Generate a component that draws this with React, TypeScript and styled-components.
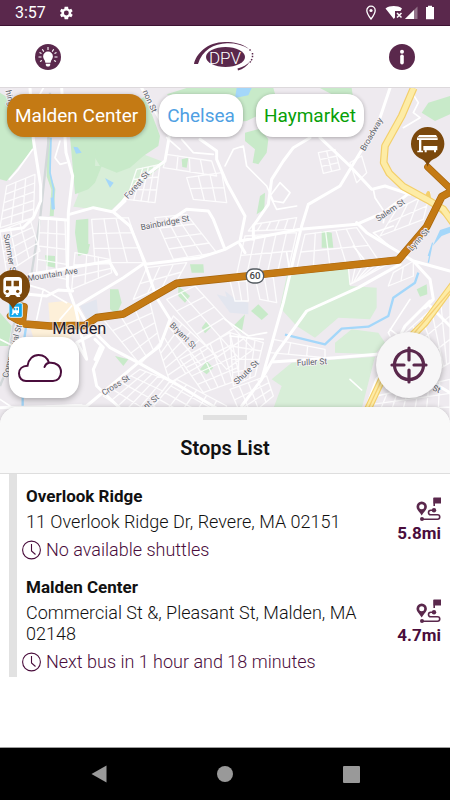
import React from "react";
import styled, { createGlobalStyle, css } from "styled-components";

const plum = "#5a284c";
const plumDark = "#4a0d3c";

const GlobalStyle = createGlobalStyle`
  *, *::before, *::after { box-sizing: border-box; }
  body { margin: 0; background: #fff; font-family: Roboto, "Liberation Sans", sans-serif; color: #111; }
  button { font: inherit; border: 0; padding: 0; cursor: pointer; }
  h1, h2, p, ul { margin: 0; padding: 0; }
`;

const Screen = styled.div`
  display: flex;
  flex-direction: column;
  min-height: 100vh;
`;

const StatusBar = styled.div`
  display: flex;
  align-items: center;
  justify-content: space-between;
  height: 26px;
  padding: 0 15px;
  background: ${plum};
  border-bottom: 1px solid #3d1232;
  color: #fff;
  font-size: 16px;
`;

const StatusGroup = styled.div<{ $gap: number }>`
  display: flex;
  align-items: center;
  gap: ${(p) => p.$gap}px;
  svg { display: block; }
`;

const Header = styled.header`
  display: flex;
  align-items: center;
  justify-content: space-between;
  height: 61px;
  padding: 0 35px;
  background: #fff;
`;

const IconButton = styled.button`
  display: flex;
  width: 26px;
  height: 26px;
  background: none;
`;

const MapArea = styled.section`
  position: relative;
  height: 336px;
  border-top: 1px solid #ddd9dc;
  background: #eeeaef;
`;

const MapSvg = styled.svg`
  position: absolute;
  inset: 0;
  width: 100%;
  height: 100%;
`;

const Chips = styled.div`
  position: relative;
  display: flex;
  gap: 13px;
  padding: 6px 7px;
`;

const Chip = styled.button<{ $color: string; $active?: boolean }>`
  height: 43px;
  padding: 0 8px;
  border-radius: 17px;
  font-size: 19px;
  white-space: nowrap;
  box-shadow: 0 1px 4px rgba(0, 0, 0, 0.3);
  ${(p) =>
    p.$active
      ? css`background: ${p.$color}; color: #fff;`
      : css`background: #fff; color: ${p.$color};`}
`;

const FloatingButton = styled.button<{ $side: "left" | "right" }>`
  position: absolute;
  bottom: 25px;
  display: flex;
  align-items: center;
  justify-content: center;
  box-shadow: 0 2px 6px rgba(0, 0, 0, 0.3);
  ${(p) =>
    p.$side === "left"
      ? css`left: 9px; width: 70px; height: 61px; padding-right: 9px; border-radius: 17px; background: #fff;`
      : css`right: 8px; width: 66px; height: 66px; border-radius: 50%; background: #f7f6f7;`}
`;

const Sheet = styled.main`
  position: relative;
  flex: 1;
  margin-top: -16px;
  border-radius: 18px 18px 0 0;
  background: #fff;
  box-shadow: 0 0 5px rgba(0, 0, 0, 0.18);
`;

const SheetHeader = styled.div`
  display: flex;
  flex-direction: column;
  align-items: center;
  height: 67px;
  padding-top: 8px;
  border-bottom: 1px solid #dedede;
  border-radius: 18px 18px 0 0;
  background: #f9f9f9;
`;

const Handle = styled.div`
  width: 44px;
  height: 5px;
  background: #e1e1e1;
`;

const SheetTitle = styled.h1`
  margin-top: 16px;
  font-size: 20px;
  line-height: 24px;
  font-weight: 600;
`;

const StopList = styled.ul`
  margin-left: 9px;
  border-left: 8px solid #e2e2e2;
  list-style: none;
`;

const StopItem = styled.li`
  display: flex;
  align-items: center;
  padding: 10px 9px 3px 5px;
`;

const StopInfo = styled.div`
  flex: 1;
  min-width: 0;
`;

const StopName = styled.h2`
  padding-left: 4px;
  font-size: 17px;
  line-height: 24px;
  font-weight: 700;
`;

const Address = styled.p`
  padding: 3px 4px 6px;
  font-size: 18px;
  line-height: 21px;
  font-weight: 300;
`;

const Arrival = styled.p`
  display: flex;
  align-items: center;
  gap: 5px;
  font-size: 18px;
  line-height: 24px;
  font-weight: 300;
  color: ${plumDark};
  svg { display: block; }
`;

const Distance = styled.div`
  display: flex;
  flex-direction: column;
  align-items: flex-end;
  width: 62px;
  padding-bottom: 4px;
  font-size: 17px;
  line-height: 24px;
  font-weight: 700;
  color: ${plumDark};
  svg { display: block; }
`;

const NavBar = styled.nav`
  display: flex;
  align-items: center;
  justify-content: space-around;
  height: 53px;
  padding: 0 36px;
  border-top: 1px solid #aaa;
  background: #000;
`;

const NavButton = styled.button`
  display: flex;
  justify-content: center;
  width: 48px;
  background: none;
`;

type Pt = [number, number];

/* Street grid inside a four-cornered block: cols x rows of crossing lines. */
function mesh([a, b, c, d]: [Pt, Pt, Pt, Pt], cols: number, rows: number) {
  const at = (u: number, v: number) =>
    [0, 1]
      .map((k) =>
        Math.round((1 - u) * (1 - v) * a[k] + u * (1 - v) * b[k] + u * v * c[k] + (1 - u) * v * d[k]),
      )
      .join(",");
  let path = "";
  for (let i = 0; i <= cols; i++) path += `M${at(i / cols, 0)} L${at(i / cols, 1)}`;
  for (let j = 0; j <= rows; j++) path += `M${at(0, j / rows)} L${at(1, j / rows)}`;
  return path;
}

const streetGrids = [
  mesh([[20, 300], [105, 265], [100, 395], [0, 425]], 3, 5),
  mesh([[0, 435], [90, 400], [120, 495], [20, 560]], 3, 4),
  mesh([[120, 400], [195, 400], [200, 580], [110, 560]], 3, 4),
  mesh([[410, 250], [480, 235], [465, 350], [380, 340]], 4, 3),
  mesh([[500, 205], [635, 225], [650, 270], [490, 245]], 4, 1),
  mesh([[560, 275], [665, 260], [680, 350], [580, 340]], 3, 2),
  mesh([[465, 395], [560, 385], [650, 500], [520, 520]], 3, 4),
  mesh([[275, 400], [385, 395], [430, 530], [285, 530]], 3, 3),
  mesh([[225, 500], [330, 520], [335, 560], [215, 610]], 3, 3),
  mesh([[440, 545], [560, 530], [530, 585], [400, 640]], 3, 2),
  mesh([[500, 640], [585, 600], [760, 790], [680, 850]], 2, 6),
  mesh([[520, 690], [650, 810], [510, 890], [475, 780]], 5, 3),
  mesh([[310, 700], [450, 650], [480, 770], [420, 835]], 3, 4),
  mesh([[420, 850], [510, 885], [420, 1005], [310, 930]], 5, 4),
  mesh([[530, 880], [680, 960], [630, 1060], [460, 960]], 5, 4),
  mesh([[690, 740], [790, 770], [765, 870], [700, 900]], 4, 4),
  mesh([[540, 820], [690, 740], [720, 880], [610, 920]], 5, 4),
  mesh([[760, 415], [890, 395], [880, 430], [745, 435]], 5, 1),
  mesh([[735, 450], [890, 440], [865, 550], [710, 565]], 5, 2),
  mesh([[915, 445], [1070, 425], [1140, 530], [890, 550]], 5, 2),
  mesh([[955, 200], [1005, 190], [1020, 250], [970, 262]], 2, 3),
  mesh([[1050, 230], [1085, 210], [1100, 260], [1070, 290]], 1, 1),
  mesh([[1045, 545], [1170, 530], [1080, 580], [1050, 595]], 6, 1),
  mesh([[820, 760], [975, 790], [975, 815], [810, 800]], 3, 1),
  mesh([[765, 575], [820, 575], [830, 650], [780, 640]], 2, 1),
  mesh([[690, 585], [740, 585], [745, 645], [705, 645]], 2, 1),
  mesh([[690, 910], [800, 870], [820, 930], [730, 1005]], 4, 3),
  mesh([[1210, 745], [1350, 620], [1350, 830], [1300, 860]], 5, 3),
  mesh([[1130, 930], [1350, 880], [1350, 1005], [1090, 1005]], 7, 3),
  mesh([[1180, 560], [1240, 525], [1240, 570], [1165, 600]], 2, 1),
  mesh([[1190, 370], [1290, 320], [1270, 400], [1140, 450]], 3, 2),
  mesh([[140, 960], [245, 955], [260, 1005], [130, 1005]], 2, 1),
].join("");

const minorStreets =
  "M28,280 55,250 98,190M180,165 165,215 180,235 200,230M545,160 580,200 640,205M100,60 130,6M500,155 540,190M675,240 700,190 730,180 740,240 800,300" +
  "M1230,10 1255,50 1240,80 1260,95 1210,125M1120,310 1125,335 1155,380 1150,410M800,300 820,345 850,350 870,320 840,290 810,330 830,370 890,360" +
  "M0,620 60,590 130,610 200,650M130,610 110,700M215,660 180,700 170,740M0,760 40,780 40,900M0,940 30,960M675,700 745,750 800,740M690,750 790,760" +
  "M1170,750 1165,740 1230,640M1050,880 1085,912M1170,730 1210,760M860,500 870,560M1180,490 1120,440 1180,420M1060,480 1100,530";

const roads =
  "M90,6 100,160 122,300 122,345 100,395 70,425 0,435M185,6 198,200 218,270 205,380 202,600 222,655M425,6 480,100 508,150 495,225 415,285 365,350 340,375" +
  "M120,395 200,402M208,385 280,365 340,378 390,420 435,530M340,378 375,345M435,530 370,575 230,660 265,720 330,785 415,830 530,895 680,985" +
  "M435,535 470,635 510,700 480,780 415,830 260,960 0,965M435,535 600,515 675,490 720,465 900,430 1070,415 1150,380 1230,320" +
  "M90,565 185,550 327,525 350,565M85,625 140,630 175,612 218,615 M675,490 640,400 625,375 560,370 500,410" +
  "M600,160 650,195 650,220 680,290 735,390 720,465M930,155 880,185 850,225 815,280 805,355 760,420 760,460" +
  "M960,155 1050,240 1115,310 1155,300 1230,325M1170,6 1135,110 1080,200 1020,300 925,355 905,420 885,500 850,650 785,880" +
  "M725,960 785,880 830,800 920,675 1075,605 1200,535M720,475 735,500M815,828 1005,815 1130,805M1290,645 1215,720 1205,740" +
  "M1070,410 1100,440 1240,525 1290,580 1300,640 1275,665M1240,525 1350,555M1290,660 1350,720M1270,340 1350,385" +
  "M1175,830 1130,880 1085,1005M1300,890 1350,920M230,770 315,725M285,760 310,785 280,850 290,900 400,1005M225,660 260,820 230,770M300,785 285,820";

const parks = [
  "0,20 40,45 100,90 98,190 20,285 0,280",
  "435,30 480,150 475,180 430,210 390,245 350,260 300,240 285,215 275,150",
  "560,6 820,6 835,60 740,105 675,110 500,25",
  "735,140 780,128 805,160 800,200 775,235 758,230 765,190 735,165",
  "960,6 1055,6 1060,40 1005,30",
  "1265,80 1285,50 1350,30 1350,85 1305,105",
  "780,330 795,320 793,370 770,385",
  "965,435 995,440 1000,485 965,485",
  "545,220 565,215 560,245 547,243",
  "228,402 265,398 265,500 235,510 225,440",
  "775,655 805,685 785,702 753,675",
  "700,720 735,685 725,740",
  "1250,610 1280,595 1282,625 1260,632",
  "135,508 165,510 165,545 140,540",
  "238,470 270,475 262,505 240,500",
  "330,610 355,610 365,650 350,685 330,670",
  "570,535 610,535 612,560 575,560",
  "535,600 570,630 555,650 535,630",
  "605,725 620,705 632,725 615,742",
  "345,810 385,820 370,840",
  "600,850 620,825 640,845 620,865",
  "0,680 35,720 25,780 0,780",
];

const paleParks = [
  "210,150 300,150 305,240 350,258 430,205 497,230 460,260 330,375 220,362 235,325",
  "860,570 1045,545 1050,600 1130,605 1130,665 1110,700 1015,695 945,755 890,720 840,665",
  "1005,770 1055,730 1135,740 1155,770 1125,805 1005,800",
  "875,830 1125,812 1075,1008 805,1008 845,900 815,880",
];

const labels: { text: string; x: number; y: number; angle: number }[] = [
  { text: "Forest St", x: 412, y: 298, angle: -49 },
  { text: "Bainbridge St", x: 495, y: 412, angle: -11 },
  { text: "Broadway", x: 1116, y: 146, angle: -60 },
  { text: "Salem St", x: 1172, y: 374, angle: -34 },
  { text: "Mountain Ave", x: 158, y: 567, angle: -9 },
  { text: "Summer St", x: 28, y: 505, angle: 80 },
  { text: "Bryant St", x: 548, y: 750, angle: 45 },
  { text: "Shute St", x: 740, y: 860, angle: -44 },
  { text: "Fuller St", x: 936, y: 830, angle: -3 },
  { text: "Cross St", x: 348, y: 899, angle: -32 },
  { text: "nt St", x: 455, y: 948, angle: -40 },
  { text: "Lynn St", x: 1258, y: 462, angle: -48 },
  { text: "hing", x: 28, y: 36, angle: 78 },
  { text: "non St", x: 448, y: 46, angle: 66 },
  { text: "Commercial St", x: 38, y: 796, angle: -75 },
  { text: "Beach St", x: 1275, y: 895, angle: 24 },
];

const route =
  "M60,660 72,662 68,700 40,682 32,690 75,714 150,720 255,718 290,695 370,684 530,592 675,577 1195,522 1280,422 1325,332 1350,318";

function CityMap() {
  return (
    <MapSvg viewBox="0 6 1350 1005" preserveAspectRatio="xMidYMin slice" role="img" aria-label="Map of Malden">
      <rect y="6" width="1350" height="1005" fill="#eeeaef" />
      <path d="M145,650 195,645 240,665 240,710 200,770 100,755 90,722 150,720Z" fill="#fdf0d9" />
      <path d="M240,660 290,640 295,690 262,700ZM650,625 745,650 745,685 690,680ZM675,615 720,650 690,670Z" fill="#e3e6ef" />
      {paleParks.map((p) => <polygon key={p} points={p} fill="#d8eed8" />)}
      {parks.map((p) => <polygon key={p} points={p} fill="#c8eac9" />)}
      <polygon points="210,150 290,150 285,240 305,240 285,290 265,310 225,325" fill="#c8eac9" />
      <path d="M148,155 146,270 160,310 155,390" fill="none" stroke="#c8eac9" strokeWidth="12" />
      <g fill="none" stroke="#a4d7fa" strokeWidth="7" strokeLinejoin="round">
        <path d="M153,155 150,260 161,310 158,370" strokeWidth="5" />
        <path d="M157,335 160,370" strokeWidth="10" />
        <path d="M855,746 975,775 1025,728 1105,722 1165,690 1180,635 1245,590 1255,560" />
        <path d="M1285,510 1298,470M1295,480 1285,530" strokeWidth="4" />
        <path d="M80,710 68,790 68,1008" />
      </g>
      <g fill="#a4d7fa">
        <path d="M220,182 233,184 245,200 228,203ZM315,276 341,290 330,305Z" />
        <path d="M710,6 755,6 745,28 705,36Z" />
        <path d="M1298,480 1320,432 1350,422 1350,440 1325,450Z" />
      </g>
      <path d="M150,20 145,170 120,400 95,560 40,720 20,850 0,900" fill="none" stroke="#d3d8da" strokeWidth="7" />
      <g fill="none" stroke="#fff" strokeLinejoin="round" strokeLinecap="round">
        <path d={streetGrids} strokeWidth="4" opacity="0.85" />
        <path d={minorStreets} strokeWidth="5" />
        <path d={roads} strokeWidth="9" />
      </g>
      <g fill="none" strokeLinejoin="round">
        <path d="M1241,6 1205,90 1155,180 1151,230 1168,262 1210,302 1280,340 1330,370 1370,425M1360,595 1275,710 1235,750 1155,860 1085,1010" stroke="#f3cf6b" strokeWidth="23" />
        <path d="M1275,340 1285,320 1290,345 1350,400" stroke="#f3cf6b" strokeWidth="10" />
        <path d="M1241,6 1205,90 1155,180 1151,230 1168,262 1210,302 1280,340 1330,370 1370,425M1360,595 1275,710 1235,750 1155,860 1085,1010" stroke="#fdeca6" strokeWidth="16" />
        <path d="M1355,610 1235,750 1155,860 1085,1010" stroke="#f6cf73" strokeWidth="4" />
      </g>
      <g fill="none" strokeLinejoin="round">
        <path d={route} stroke="#a8660c" strokeWidth="23" />
        <path d="M1283,243 1355,312" stroke="#a8660c" strokeWidth="21" strokeLinecap="round" />
        <path d={route} stroke="#c47a14" strokeWidth="19" />
        <path d="M1283,243 1355,312" stroke="#c47a14" strokeWidth="17" strokeLinecap="round" />
      </g>
      <g fontFamily="Roboto, sans-serif" fontSize="25" fill="#5d646b" textAnchor="middle" stroke="#f7f3f6" strokeWidth="5" paintOrder="stroke" strokeLinejoin="round">
        {labels.map((l) => (
          <text key={l.text} dominantBaseline="middle" transform={`translate(${l.x} ${l.y}) rotate(${l.angle})`}>
            {l.text}
          </text>
        ))}
      </g>
      <text x="238" y="743" fontFamily="Roboto, sans-serif" fontSize="49" textAnchor="middle" fill="#1c1b30" stroke="#f9eee6" strokeWidth="6" strokeOpacity="0.75" paintOrder="stroke">
        Malden
      </text>
      <rect x="739" y="549" width="52" height="42" rx="20" fill="#fff" stroke="#555c62" strokeWidth="4" />
      <text x="765" y="580" fontFamily="Roboto, sans-serif" fontSize="29" fontWeight="500" textAnchor="middle" fill="#444">60</text>

      <rect x="27" y="651" width="40" height="43" rx="4" fill="#12a9ee" stroke="#dff2fc" strokeWidth="3" />
      <path d="M37,662h20v20h-5l3,5h-5l-3,-5h-5l-3,5h-5l3,-5z" fill="#fff" />
      <path d="M41,665h5v8h-5zM49,665h5v8h-5z" fill="#12a9ee" />

      <path d="M39,552a50,50 0 0 1 18,97q-13,7 -18,22q-5,-15 -18,-22a50,50 0 0 1 18,-97z" fill="#7b480c" />
      <rect x="10" y="573" width="56" height="54" rx="11" fill="#fff" />
      <path d="M18,584h16v17h-16zM41,584h16v17h-16z" fill="#7b480c" />
      <circle cx="22" cy="616" r="5" fill="#7b480c" />
      <circle cx="53" cy="616" r="5" fill="#7b480c" />
      <path d="M18,627h14l-6,6h-10zM45,627h14l2,6h-10z" fill="#fff" />

      <path d="M1283,123a50,50 0 0 1 17,97q-13,7 -17,22q-5,-15 -17,-22a50,50 0 0 1 17,-97z" fill="#7b480c" />
      <g fill="#fff">
        <path d="M1258,147h50l5,8v7h-62v-7z" />
        <path d="M1257,162h7v32h5v5h-17v-5h5z" />
        <path d="M1270,180h42v13h-4v6h-6v-6h-22v6h-6v-6h-4z" />
      </g>
      <path d="M1253,155h60" stroke="#7b480c" strokeWidth="2" />
    </MapSvg>
  );
}

const ClockIcon = () => (
  <svg width="19" height="20" viewBox="0 0 19 20" fill="none" stroke={plumDark} strokeWidth="1.1" aria-hidden="true">
    <circle cx="9.5" cy="10" r="8.9" />
    <path d="M9.5 4v7l4 3.5" />
  </svg>
);

const RouteIcon = () => (
  <svg width="25" height="24" viewBox="0 0 25 24" aria-hidden="true">
    <path fillRule="evenodd" fill={plum} d="M5.7 4.5a5.2 5.2 0 0 1 5.2 5.2c0 3-3 5-5.2 8.7C3.5 14.7.5 12.7.5 9.7a5.2 5.2 0 0 1 5.2-5.2zm0 2.800a2.500 2.500 0 1 0 0 5 2.500 2.500 0 0 0 0-5z" />
    <path d="M18.200 1v8M18 13.200h-3.200a2.300 2.300 0 0 0 0 4.600h6.700a2.200 2.200 0 0 1 0 4.500H6" fill="none" stroke={plum} strokeWidth="1.600" />
    <path d="M17.500.5H25v6h-7.500z" fill={plum} />
    <circle cx="18" cy="13.200" r="2.200" fill={plum} />
    <circle cx="6" cy="22" r="2" fill={plum} />
  </svg>
);

const Logo = () => (
  <svg width="62" height="32" viewBox="195 42 62 32" role="img" aria-label="DPV logo">
    <path d="M195 65c2-10 13-22 31-22 9 0 17 1.500 24 7-6-4-14-6-22-5.800-13 .3-25 7-29 20.800z" fill={plum} />
    <ellipse cx="226.500" cy="58" rx="19.500" ry="10" fill={plum} />
    <text x="226" y="64.500" textAnchor="middle" fontFamily="Roboto, sans-serif" fontSize="17" fontWeight="300" fill="#fff" textRendering="geometricPrecision">
      DPV
    </text>
    <path d="M250.500 50.500l2 2M253.500 54v4.500M253 60l-2 3.500" fill="none" stroke={plum} strokeWidth="1.500" strokeDasharray="1.500 1.200" />
    <path d="M251 62.500c-3 3.500-7 5.500-12.500 7l.5 1.900c5-1.300 9-4 12-8.900z" fill={plum} />
  </svg>
);

const stops = [
  { name: "Overlook Ridge", address: "11 Overlook Ridge Dr, Revere, MA 02151", arrival: "No available shuttles", distance: "5.8mi" },
  { name: "Malden Center", address: "Commercial St &, Pleasant St, Malden, MA 02148", arrival: "Next bus in 1 hour and 18 minutes", distance: "4.7mi" },
];

export default function App() {
  return (
    <Screen>
      <GlobalStyle />
      <StatusBar>
        <StatusGroup $gap={13}>
          <span>3:57</span>
          <svg width="14" height="14" viewBox="2 2 20 20" fill="#fff" aria-hidden="true">
            <path fillRule="evenodd" d="M19.400 13a7.800 7.800 0 0 0 0-2l2.100-1.600-2-3.500-2.500 1a7.600 7.600 0 0 0-1.700-1L15 3.200h-5l-.4 2.700a7.600 7.600 0 0 0-1.700 1l-2.500-1-2 3.500L5.500 11a7.800 7.800 0 0 0 0 2l-2.100 1.600 2 3.500 2.500-1 1.700 1 .4 2.700h5l.4-2.700 1.700-1 2.500 1 2-3.500zM12.500 15.500a3.500 3.500 0 1 1 0-7 3.500 3.500 0 0 1 0 7z" />
          </svg>
        </StatusGroup>
        <StatusGroup $gap={4}>
          <svg width="69" height="16" viewBox="0 0 69 16" aria-hidden="true">
            <path d="M5 1.200a4.200 4.200 0 0 1 4.200 4.200C9.200 8.500 5 14 5 14S.8 8.500.8 5.400A4.200 4.200 0 0 1 5 1.200z" fill="none" stroke="#fff" strokeWidth="1.300" />
            <circle cx="5" cy="5.500" r="1.600" fill="#fff" />
            <path d="M19.500 3.500C24 .3 31.500.3 36 3.500L34.500 6H29v6.500l-1.200 1.500z" fill="#fff" />
            <path d="M31 8l4.500 4.500M35.500 8L31 12.500" stroke="#fff" strokeWidth="1.500" />
            <path d="M39 14L51.500 1.500V14z" fill="#fff" opacity=".35" />
            <path d="M39 14l9-9v9z" fill="#fff" />
            <path d="M60 2h2V.8h4V2h2v12.200h-8z" fill="#fff" />
          </svg>
        </StatusGroup>
      </StatusBar>

      <Header>
        <IconButton aria-label="Tips">
          <svg width="26" height="26" viewBox="0 0 26 26" aria-hidden="true">
            <circle cx="13" cy="13" r="13" fill={plum} />
            <path d="M13 7.500a4.900 4.900 0 0 1 4.900 4.900c0 2.300-2 3.300-2.300 6.300h-5.200c-.3-3-2.300-4-2.300-6.300A4.900 4.900 0 0 1 13 7.500zM10.800 19.800h4.400v1.500l-1 1.200h-2.400l-1-1.200z" fill="#fff" />
            <path d="M13 3v3M7.300 5.300l1.500 2.300M18.700 5.300l-1.500 2.300M3.500 13h3M19.500 13h3M4.500 8.500l2 1M21.500 8.500l-2 1M5 17.500l2-1M21 17.500l-2-1" stroke="#fff" strokeWidth="1.100" />
          </svg>
        </IconButton>
        <Logo />
        <IconButton aria-label="Information">
          <svg width="26" height="26" viewBox="0 0 26 26" aria-hidden="true">
            <circle cx="13" cy="13" r="13" fill={plum} />
            <circle cx="13" cy="7.800" r="2" fill="#fff" />
            <path d="M13 12.300v6.400" stroke="#fff" strokeWidth="3.600" strokeLinecap="round" />
          </svg>
        </IconButton>
      </Header>

      <MapArea>
        <CityMap />
        <Chips>
          <Chip $color="#c47a14" $active>Malden Center</Chip>
          <Chip $color="#4f9fe3">Chelsea</Chip>
          <Chip $color="#08a008">Haymarket</Chip>
        </Chips>
        <FloatingButton $side="left" aria-label="Weather">
          <svg width="44" height="28" viewBox="0 0 44 28" fill="none" stroke={plumDark} strokeWidth="2" strokeLinecap="round" aria-hidden="true">
            <path d="M8 27C4 27 1 24 1 19.500S4.500 12 9.500 11.800C10.500 5 15 1 20.500 1c5 0 9 3 10.500 7.800C38 8 43 12 43 18c0 5.500-3.500 9-8 9zM26.500 13c.8-2.300 2.300-3.800 4.500-4.200" />
          </svg>
        </FloatingButton>
        <FloatingButton $side="right" aria-label="Center on my location">
          <svg width="38" height="38" viewBox="0 0 38 38" fill="none" stroke={plum} strokeWidth="3.200" strokeLinecap="round" aria-hidden="true">
            <circle cx="19" cy="19" r="14.500" />
            <path d="M19 2v12M19 24v12M2 19h12M24 19h12" />
          </svg>
        </FloatingButton>
      </MapArea>

      <Sheet>
        <SheetHeader>
          <Handle />
          <SheetTitle>Stops List</SheetTitle>
        </SheetHeader>
        <StopList>
          {stops.map((s) => (
            <StopItem key={s.name}>
              <StopInfo>
                <StopName>{s.name}</StopName>
                <Address>{s.address}</Address>
                <Arrival><ClockIcon />{s.arrival}</Arrival>
              </StopInfo>
              <Distance>
                <RouteIcon />
                {s.distance}
              </Distance>
            </StopItem>
          ))}
        </StopList>
      </Sheet>

      <NavBar>
        <NavButton aria-label="Back">
          <svg width="16" height="18" viewBox="0 0 16 18" fill="#999"><path d="M15.500.5v17L.5 9z" /></svg>
        </NavButton>
        <NavButton aria-label="Home">
          <svg width="16" height="16" viewBox="0 0 16 16" fill="#999"><circle cx="8" cy="8" r="8" /></svg>
        </NavButton>
        <NavButton aria-label="Recent apps">
          <svg width="17" height="17" viewBox="0 0 17 17" fill="#999"><rect width="17" height="17" rx="1" /></svg>
        </NavButton>
      </NavBar>
    </Screen>
  );
}
